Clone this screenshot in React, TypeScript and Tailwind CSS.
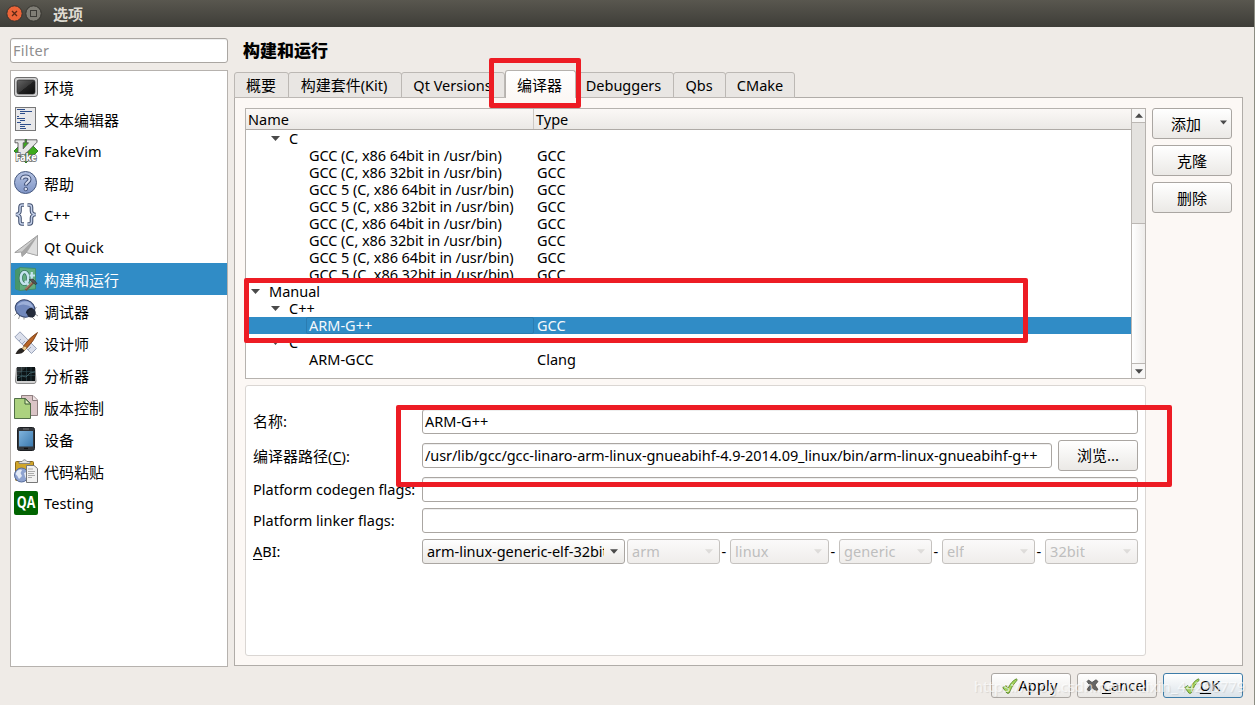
import React from "react";

const LATIN = "font-['Noto_Sans','Noto_Sans_CJK_SC',sans-serif]";

function Box({ children }: { children: React.ReactNode }) {
  return (
    <svg width="24" height="24" viewBox="0 0 24 24" className="shrink-0">
      {children}
    </svg>
  );
}

const EnvIcon = () => (
  <Box>
    <defs>
      <linearGradient id="env" x1="0" y1="0" x2="1" y2="1">
        <stop offset="0" stopColor="#666" /><stop offset=".5" stopColor="#3a3a3a" /><stop offset=".52" stopColor="#222" /><stop offset="1" stopColor="#0c0c0c" />
      </linearGradient>
    </defs>
    <rect x=".5" y="2.5" width="23" height="19" rx="2.5" fill="#cfcfd0" stroke="#6c6c6c" />
    <rect x="3" y="5" width="18" height="14" rx="2" fill="url(#env)" stroke="#222" strokeWidth=".6" />
  </Box>
);

const TextIcon = () => (
  <Box>
    <rect x="1.5" y=".5" width="20" height="23" fill="#e8e8ea" stroke="#777" />
    <path d="M3 2.5h8M6 4.5h12M6 6.5h5M3 9.5h2M3 11.5h8M6 13.5h5M3 15.5h4M6 17.5h11M6 19.5h5M6 21.5h6" stroke="#2f4f8c" />
  </Box>
);

const VimIcon = () => (
  <Box>
    <path d="M12 0L24 12L12 24L0 12Z" fill="#3cab1c" stroke="#176b10" strokeWidth=".8" />
    <path d="M1 .8h10v3H9.200v6L14.500 3.800h-2v-3h10.500v2.400L9.500 17H4V3.800H1z" fill="#e6e6e6" stroke="#555" strokeWidth=".9" />
    <text x="12" y="21.500" textAnchor="middle" textLength="21" lengthAdjust="spacingAndGlyphs" fontSize="10" fontWeight="bold" fontFamily="Noto Sans" fill="#fff" stroke="#666" strokeWidth="1.600" paintOrder="stroke">Fake</text>
  </Box>
);

const HelpIcon = () => (
  <Box>
    <defs>
      <linearGradient id="hlp" x1="0" y1="0" x2="0" y2="1">
        <stop offset="0" stopColor="#b4c2e2" /><stop offset="1" stopColor="#7f95c6" />
      </linearGradient>
    </defs>
    <circle cx="11.5" cy="11.5" r="11" fill="url(#hlp)" stroke="#46587f" />
    <path d="M8 8.5C8 4.5 15.500 4.500 15.500 8.500C15.500 11 11.800 11.200 11.800 14.500" fill="none" stroke="#3d4d73" strokeWidth="4" />
    <path d="M8 8.500C8 4.500 15.500 4.500 15.500 8.500C15.500 11 11.800 11.200 11.800 13.800" fill="none" stroke="#d5dcef" strokeWidth="2" />
    <circle cx="11.800" cy="18" r="1.800" fill="#d5dcef" stroke="#3d4d73" strokeWidth=".9" />
  </Box>
);

const BRACES = "M10 2H8Q6 2 6 4.500V8Q6 11 2 11.500Q6 12 6 15V18.500Q6 21 8 21H10M13.500 2H15.500Q17.500 2 17.500 4.500V8Q17.500 11 21.500 11.500Q17.500 12 17.500 15V18.500Q17.500 21 15.500 21H13.500";

const CppIcon = () => (
  <Box>
    <path d={BRACES} fill="none" stroke="#42506f" strokeWidth="3.600" />
    <path d={BRACES} fill="none" stroke="#c3cfe8" strokeWidth="1.500" />
  </Box>
);

const QuickIcon = () => (
  <Box>
    <path d="M23.500 .5L.8 17.500L7.500 17L8 21.500L12.500 17.500L23.500 20.500Z" fill="#cfcfcf" stroke="#8b8b8b" strokeWidth=".8" />
    <path d="M23.500 .5L7.500 17L8 21.500L12.500 17.500Z" fill="#a6a6a6" />
    <path d="M23.500 .5L12.500 17.500L23.500 20.500Z" fill="#dedede" stroke="#909090" strokeWidth=".5" />
  </Box>
);

const BuildIcon = () => (
  <Box>
    <path d="M1.500 3L6 .5L21.500 1.500V22L6 23.500L1.500 22Z" fill="#62ad80" stroke="#3f8a60" strokeWidth=".8" />
    <path d="M1.500 3L6 .5V23.500L1.500 22Z" fill="#47966a" />
    <ellipse cx="10.500" cy="11" rx="3.700" ry="6" fill="none" stroke="#2f6b58" strokeWidth="4" />
    <ellipse cx="10.500" cy="11" rx="3.700" ry="6" fill="none" stroke="#c5e4ee" strokeWidth="2.600" />
    <path d="M11 14L15 18.500M17.800 5V15.500M15.500 8.500H21" stroke="#c5e4ee" strokeWidth="2.200" />
    <path d="M11.500 23L19 15.500" stroke="#7a5741" strokeWidth="2.600" />
    <path d="M11.500 22L18.500 15" stroke="#c69a82" strokeWidth="1" />
    <path d="M15.500 12.500L19 12L23 16.500L21.500 17.500L18 15Z" fill="#555" stroke="#222" strokeWidth=".6" />
  </Box>
);

const DebugIcon = () => (
  <Box>
    <path d="M3 14L.5 16.500M6 16L4.500 20M10 17.500V20.500M18 18L21 21M20 11L22.500 8M21 15L24 17" stroke="#888" strokeWidth=".9" fill="none" />
    <ellipse cx="11" cy="9.500" rx="9.800" ry="8.600" fill="#7289bd" stroke="#35456b" transform="rotate(15 11 9.500)" />
    <path d="M3 7Q6 1.500 14 2.500Q19 5 19 9Q11 3 3 7Z" fill="#9db0d9" />
    <circle cx="17.300" cy="14" r="4.500" fill="#252c3c" />
    <path d="M12.500 14.500Q13 9.500 18.500 9.500" fill="none" stroke="#1b2335" strokeWidth="1.500" />
  </Box>
);

const DesignIcon = () => (
  <Box>
    <path d="M.8 6L6 .8L22.500 17.500L17.500 22.500Z" fill="#dce0ec" stroke="#8f9ab2" strokeWidth=".9" />
    <path d="M5 10l2-2M8 13l3-3M11 16l2-2M14 19l3-3" stroke="#8995b0" strokeWidth=".8" />
    <path d="M23.500 1.500Q16 6 9.500 15L12 18Q20 10 23.500 1.500Z" fill="#b86426" stroke="#713811" strokeWidth=".8" />
    <path d="M11 15L7 18L9.500 20.500L13 17Z" fill="#eeca8b" stroke="#815f35" strokeWidth=".6" />
    <path d="M7.500 17Q4 17.500 1.500 23Q8.500 23.500 10.500 19.500Z" fill="#292522" />
  </Box>
);

const AnalyzeIcon = () => (
  <Box>
    <path d="M2.500 5L1.500 18Q1.500 20.500 3.500 20.500H20Q22 20.500 22 18L21 5Z" fill="#d0d0d0" stroke="#888" />
    <rect x="3" y="4" width="18" height="14" fill="#0d1416" />
    <path d="M3 8.500H21M3 12.500H21M7.500 4V18M12.500 4V18M17 4V18" stroke="#2f4c54" strokeWidth=".6" />
    <path d="M4 15L8 13L12 14L16 10L21 9" fill="none" stroke="#4f767d" strokeWidth=".7" />
    <path d="M3 4H12L3 14Z" fill="#fff" opacity=".12" />
  </Box>
);

const VcsIcon = () => (
  <Box>
    <path d="M7.500 .5H19L23.500 5V20.500H7.500Z" fill="#dac4c6" stroke="#8e7f80" />
    <path d="M18.500 .5V5.500H23.500" fill="#f1e6e7" stroke="#8e7f80" />
    <path d="M.5 3.500H11.500L16.500 8.500V23.500H.5Z" fill="#acd27f" stroke="#516f48" />
    <path d="M11 3.500V9H16.500Z" fill="#ddefb8" stroke="#3c5c38" />
  </Box>
);

const DeviceIcon = () => (
  <Box>
    <defs><linearGradient id="dev" x1="0" y1="0" x2="1" y2="1"><stop offset="0" stopColor="#80b4dd" /><stop offset="1" stopColor="#3b79ae" /></linearGradient></defs>
    <rect x="3.500" y=".5" width="17" height="23" rx="2" fill="#33373c" stroke="#1c1f23" />
    <rect x="5" y="4" width="14" height="15.500" fill="url(#dev)" />
    <path d="M9 2H15" stroke="#777" />
    <rect x="10" y="20.800" width="4" height="1.300" fill="#111" />
  </Box>
);

const PasteIcon = () => (
  <Box>
    <rect x="1.500" y="2.500" width="18" height="19" rx="1" fill="#d1a62a" stroke="#89671a" />
    <path d="M5 4.500V2.500H8Q10.500 -1 13 2.500H16V4.500Z" fill="#e3e3e3" stroke="#777" strokeWidth=".8" />
    <circle cx="7.500" cy="16" r="7" fill="#8ea3d0" stroke="#566b99" />
    <path d="M3 12Q6 9.500 8 11L6.500 14L8 17L5 20Q4 17 1.500 15ZM10 14L13.500 12.500L14 17L11.500 19Z" fill="#e3eaf5" />
    <path d="M12.500 6.500H20L23.500 9.500V23.500H12.500Z" fill="#f1f1f1" stroke="#777" />
    <path d="M14 10h5M14 12.500h7M14 14.500h6M14 16.500h7M14 18.500h4" stroke="#999" strokeWidth=".8" />
  </Box>
);

const QaIcon = () => (
  <Box>
    <rect width="24" height="24" rx="2" fill="#006400" />
    <text x="12" y="17" textAnchor="middle" textLength="18.500" lengthAdjust="spacingAndGlyphs" fontSize="15.500" fontWeight="bold" fontFamily="Open Sans" fill="#fff">QA</text>
  </Box>
);

const CJK = "text-[15px] pt-[3px]";

const categories: [string, () => React.ReactElement, string][] = [
  ["环境", EnvIcon, CJK],
  ["文本编辑器", TextIcon, CJK],
  ["FakeVim", VimIcon, "text-[14.5px]"],
  ["帮助", HelpIcon, CJK],
  ["C++", CppIcon, "text-[14.5px] tracking-[0.1px]"],
  ["Qt Quick", QuickIcon, "text-[14.5px] tracking-[0.1px]"],
  ["构建和运行", BuildIcon, CJK],
  ["调试器", DebugIcon, CJK],
  ["设计师", DesignIcon, CJK],
  ["分析器", AnalyzeIcon, CJK],
  ["版本控制", VcsIcon, CJK],
  ["设备", DeviceIcon, CJK],
  ["代码粘贴", PasteIcon, CJK],
  ["Testing", QaIcon, "text-[14.5px] tracking-[0.1px]"],
];

function Arrow({ className = "" }: { className?: string }) {
  return (
    <svg width="9" height="5" viewBox="0 0 9 5" className={`shrink-0 ${className}`}>
      <path d="M0 0H9L4.500 5Z" fill="currentColor" />
    </svg>
  );
}

const rows: { name: string; type?: string; depth: number; selected?: boolean }[] = [
  { name: "C", depth: 1 },
  { name: "GCC (C, x86 64bit in /usr/bin)", type: "GCC", depth: 2 },
  { name: "GCC (C, x86 32bit in /usr/bin)", type: "GCC", depth: 2 },
  { name: "GCC 5 (C, x86 64bit in /usr/bin)", type: "GCC", depth: 2 },
  { name: "GCC 5 (C, x86 32bit in /usr/bin)", type: "GCC", depth: 2 },
  { name: "GCC (C, x86 64bit in /usr/bin)", type: "GCC", depth: 2 },
  { name: "GCC (C, x86 32bit in /usr/bin)", type: "GCC", depth: 2 },
  { name: "GCC 5 (C, x86 64bit in /usr/bin)", type: "GCC", depth: 2 },
  { name: "GCC 5 (C, x86 32bit in /usr/bin)", type: "GCC", depth: 2 },
  { name: "Manual", depth: 0 },
  { name: "C++", depth: 1 },
  { name: "ARM-G++", type: "GCC", depth: 2, selected: true },
  { name: "C", depth: 1 },
  { name: "ARM-GCC", type: "Clang", depth: 2 },
];

const indent = ["pl-[5px]", "pl-[25px]", "pl-[60px]"];

function TreeRow({ name, type, depth, selected }: (typeof rows)[number]) {
  return (
    <div className={`flex h-[17px] shrink-0 items-center leading-[17px] ${selected ? "bg-[#308cc6] text-[#f4f8fb]" : ""}`}>
      <div className={`flex h-[17px] w-[288px] shrink-0 items-center ${indent[depth]}`}>
        {depth < 2 && <Arrow className="mr-[9px] text-[#4a4a4a]" />}
        <span className={`whitespace-pre ${depth === 2 ? "flex h-[17px] flex-1 items-center border pl-[2px]" : ""} ${selected ? "rounded-[2px] border-[#2a7cb1]" : "border-transparent"} ${name.startsWith("GCC") ? "tracking-[-0.075px]" : ""}`}>{name}</span>
      </div>
      <span className="pl-[3px]">{type}</span>
    </div>
  );
}

const face = "border border-[#aaa6a2] rounded-[3px] bg-linear-to-b from-white to-[#ebe9e6]";

function Tab({ children, className = "" }: { children: React.ReactNode; className?: string }) {
  return (
    <div className={`flex h-[26px] items-center justify-center whitespace-nowrap rounded-t-[3px] border border-[#bcb8b4] bg-[#e9e6e3] pt-[1px] ${className}`}>
      {children}
    </div>
  );
}

function Field({ value, className = "" }: { value?: string; className?: string }) {
  return (
    <div className={`flex h-[25px] items-center overflow-hidden whitespace-nowrap rounded-[3px] border border-[#aaa6a2] bg-white pl-[2px] shadow-[inset_0_1px_0_#eee] ${className}`}>
      {value}
    </div>
  );
}

function Combo({ value, className, disabled = true }: { value: string; className: string; disabled?: boolean }) {
  return (
    <div className={`flex h-[25px] shrink-0 items-center justify-between rounded-[3px] border bg-linear-to-b pl-[4px] pr-[6px] ${disabled ? "border-[#c5c2bf] from-[#fbfafa] to-[#efedeb] text-[#bebebe]" : "border-[#aaa6a2] from-white to-[#ebe9e6]"} ${className}`}>
      <span className={`overflow-hidden whitespace-nowrap leading-[23px] ${disabled ? "tracking-[0.1px]" : "w-[177px] shrink-0 tracking-[-0.04px]"}`}>{value}</span>
      <Arrow className={disabled ? "w-[8px] text-[#dedcda]" : "w-[8px] text-[#4a4a4a]"} />
    </div>
  );
}

function CheckMark() {
  return (
    <svg width="16" height="16" viewBox="0 0 16 16" className="shrink-0">
      <path d="M.8 9.500L4 7.500L6 10.500Q9 3.500 14.500 .8L15.200 2Q10 7 7 15.200H5Z" fill="#a5d65d" stroke="#5d8b2c" strokeWidth=".9" />
    </svg>
  );
}

function CrossMark() {
  return (
    <svg width="13" height="13" viewBox="0 0 13 13" className="shrink-0">
      <path d="M1 2.500L2.500 1L6 3.500L10 .8L12 2.500L9 6L12 10.500L10 12L6.500 9L3 12L1 10.500L4 6.500Z" fill="#666" stroke="#474747" strokeWidth=".8" />
    </svg>
  );
}

export default function App() {
  return (
    <div className={`relative flex h-[705px] w-[1255px] flex-col overflow-hidden border-r border-[#8c8d83] bg-[#efebe7] text-[14.5px] leading-[17px] text-black ${LATIN}`}>
      <header className="flex h-[27px] shrink-0 items-center bg-linear-to-b from-[#59574f] to-[#3e3d38] pl-[6px]">
        <svg width="36" height="18" viewBox="0 0 36 18">
          <circle cx="8.500" cy="8.500" r="7.700" fill="#ec6438" stroke="#34332e" />
          <path d="M6 6L11 11M11 6L6 11" stroke="#5c2815" strokeWidth="1.300" />
          <circle cx="27.500" cy="8.500" r="7.700" fill="#807e76" stroke="#34332e" />
          <rect x="24.500" y="5.500" width="6" height="6" fill="none" stroke="#3b3a36" />
        </svg>
        <span className="ml-[11px] mt-[2px] text-[15px] font-bold text-[#dfdbd2]">选项</span>
      </header>

      <div className="flex h-[640px] shrink-0 pl-[10px] pt-[11px]">
        <aside className="flex w-[218px] shrink-0 flex-col">
          <Field value="Filter" className="shrink-0 tracking-[0.3px] text-[#8f8f8f]" />
          <nav className="mt-[7px] h-[597px] border border-[#b6b2ae] bg-white">
            {categories.map(([label, Icon, size]) => (
              <div key={label} className={`flex h-8 items-center gap-[6px] pl-[3px] ${label === "构建和运行" ? "bg-[#308cc6] text-white" : ""}`}>
                <Icon />
                <span className={`whitespace-nowrap ${size}`}>{label}</span>
              </div>
            ))}
          </nav>
        </aside>

        <main className="ml-[6px] flex w-[1009px] flex-col">
          <h1 className="ml-[9px] mt-[4px] h-[17px] shrink-0 text-[17px] font-black leading-[17px]">构建和运行</h1>
          <div className="relative mt-[11px] -mb-px flex h-[28px] shrink-0 items-end">
            <Tab className="w-[55px] pr-[1px] text-[15px]">概要</Tab>
            <Tab className="-ml-px w-[114px] pr-[2px] text-[15px]">构建套件<span className="text-[14.5px]">(Kit)</span></Tab>
            <Tab className="-ml-px w-[104px] pr-[1px]">Qt Versions</Tab>
            <div className="flex h-[28px] w-[71px] items-center justify-center rounded-t-[3px] border border-b-0 border-[#b6b2ae] bg-linear-to-b from-white to-[#fcf8f5] pr-[2px] pt-[1px] text-[15px]">编译器</div>
            <Tab className="-ml-px w-[99px] pr-[2px]">Debuggers</Tab>
            <Tab className="-ml-px w-[53px] pr-[1px]">Qbs</Tab>
            <Tab className="-ml-px w-[70px]">CMake</Tab>
          </div>
          <section className="flex h-[569px] shrink-0 border border-[#b0aca8] bg-[#fcf8f5] pl-[10px] pt-[10px]">
            <div className="flex w-[901px] shrink-0 flex-col">
              <div className="flex h-[271px] shrink-0 border border-[#b6b2ae] bg-white">
                <div className="flex w-[885px] shrink-0 flex-col overflow-hidden">
                  <div className="flex h-[21px] shrink-0 border-b border-[#aeaaa6] bg-linear-to-b from-[#fbf8f6] to-[#ebe9e6] leading-[21px]">
                    <div className="w-[288px] border-r border-[#cdc9c5] pl-[2px]">Name</div>
                    <div className="pl-[2px]">Type</div>
                  </div>
                  {rows.map((row, i) => <TreeRow key={i} {...row} />)}
                </div>
                <div className="flex w-[14px] flex-col border-l border-[#bbb7b3] bg-[#e4e2df]">
                  <div className="flex h-[14px] items-center justify-center border-b border-[#bbb7b3] bg-[#f8f7f6] text-[#4a4a4a]"><Arrow className="w-[8px] rotate-180" /></div>
                  <div className="h-[100px]" />
                  <div className="h-[141px] border-y border-[#bbb7b3] bg-linear-to-r from-white to-[#eeecea]" />
                  <div className="flex h-[14px] items-center justify-center bg-[#f8f7f6] text-[#4a4a4a]"><Arrow className="w-[8px]" /></div>
                </div>
              </div>

              <div className="mt-[6px] flex h-[271px] flex-col rounded-[3px] border border-[#dad6d3] bg-white pl-[7px] pt-[23px]">
                <div className="flex h-[25px] items-center">
                  <span className="w-[169px] shrink-0 text-[15px]">名称:</span>
                  <Field value="ARM-G++" className="w-[716px]" />
                </div>
                <div className="mt-[6px] flex h-[31px] items-center">
                  <span className="w-[169px] shrink-0 pt-[1px] text-[15px]">编译器路径<span className="text-[14.5px]">(<span className="underline underline-offset-2">C</span>):</span></span>
                  <Field value="/usr/lib/gcc/gcc-linaro-arm-linux-gnueabihf-4.9-2014.09_linux/bin/arm-linux-gnueabihf-g++" className="w-[630px] text-[14.5px] tracking-[-0.075px]" />
                  <button className={`ml-[6px] h-[31px] w-[80px] text-[15px] ${face}`}>浏览...</button>
                </div>
                <div className="mt-[6px] flex h-[25px] items-center">
                  <span className="w-[169px] shrink-0 whitespace-nowrap">Platform codegen flags:</span>
                  <Field className="w-[716px]" />
                </div>
                <div className="mt-[6px] flex h-[25px] items-center">
                  <span className="w-[169px] shrink-0 whitespace-nowrap">Platform linker flags:</span>
                  <Field className="w-[716px]" />
                </div>
                <div className="mt-[6px] flex h-[25px] items-center">
                  <span className="w-[169px] shrink-0"><span className="underline underline-offset-2">A</span>BI:</span>
                  <Combo value="arm-linux-generic-elf-32bit" className="w-[203px]" disabled={false} />
                  <Combo value="arm" className="ml-[2px] w-[93px]" />
                  <span className="w-[10px] pl-[1.5px]">-</span>
                  <Combo value="linux" className="w-[99px]" />
                  <span className="w-[10px] pl-[1.5px]">-</span>
                  <Combo value="generic" className="w-[93px]" />
                  <span className="w-[10px] pl-[1.5px]">-</span>
                  <Combo value="elf" className="w-[93px]" />
                  <span className="w-[10px] pl-[1.5px]">-</span>
                  <Combo value="32bit" className="w-[93px]" />
                </div>
              </div>
            </div>
            <div className="ml-[6px] flex w-[80px] flex-col gap-[6px] text-[15px]">
              <button className={`flex h-[31px] items-center pl-[18px] pr-[4px] pt-[1px] ${face}`}>
                <span>添加</span>
                <Arrow className="mb-[3px] ml-auto w-[7px] text-[#4a4a4a]" />
              </button>
              <button className={`h-[31px] pt-[1px] ${face}`}>克隆</button>
              <button className={`h-[31px] pt-[1px] ${face}`}>删除</button>
            </div>
          </section>
        </main>
      </div>

      <footer className="flex h-[38px] justify-end gap-[6px] pr-[11px] pt-[6px]">
        <button className={`flex h-[25px] w-[80px] items-center justify-center pr-[2px] ${face}`}><CheckMark /><span className="tracking-[0.2px]">Apply</span></button>
        <button className={`flex h-[25px] w-[80px] items-center justify-center gap-[3px] pr-[1px] ${face}`}><CrossMark /><span><span className="underline underline-offset-2">C</span>ancel</span></button>
        <button className="flex h-[25px] w-[80px] items-center justify-center rounded-[3px] border border-[#3d7ca8] bg-linear-to-b from-white to-[#dbe3e9] pr-[2px]"><CheckMark /><span><span className="underline underline-offset-2">O</span>K</span></button>
      </footer>

      <div className="absolute left-[489px] top-[58px] h-[50px] w-[92px] rounded-[2px] border-[5px] border-[#ed1c24]" />
      <div className="absolute left-[244px] top-[278px] h-[65px] w-[784px] rounded-[2px] border-[5px] border-[#ed1c24]" />
      <div className="absolute left-[396px] top-[405px] h-[82px] w-[776px] rounded-[2px] border-[5px] border-[#ed1c24]" />
      <div className="absolute left-[974px] top-[678px] whitespace-nowrap text-[14.5px] tracking-[0.2px] text-white/65 [text-shadow:1px_1px_1px_#0000001a]">https://blog.csdn.net/weixin_44296779</div>
    </div>
  );
}
